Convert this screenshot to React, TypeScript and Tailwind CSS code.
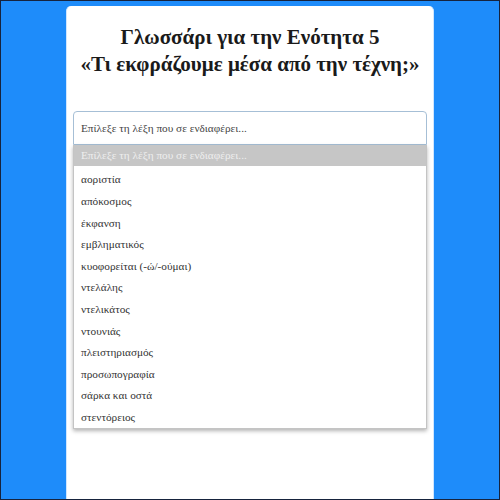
const words = [
  'αοριστία',
  'απόκοσμος',
  'έκφανση',
  'εμβληματικός',
  'κυοφορείται (-ώ/-ούμαι)',
  'ντελάλης',
  'ντελικάτος',
  'ντουνιάς',
  'πλειστηριασμός',
  'προσωπογραφία',
  'σάρκα και οστά',
  'στεντόρειος',
]

const placeholder = 'Επίλεξε τη λέξη που σε ενδιαφέρει...'

export default function App() {
  return (
    <div
      className="h-[500px] w-[500px] overflow-hidden border border-[#16233d] bg-[#1e8cfa] pt-[5px]"
      style={{ fontFamily: '"Liberation Serif", "DejaVu Serif", serif' }}
    >
      <div className="mx-auto h-full w-[368px] rounded-t-[5px] border-x border-[#cfe6ff] bg-white px-[6px]">
        <h1 className="-mx-[6px] whitespace-nowrap pt-[18px] text-center text-[21px] font-bold leading-[27px] text-[#1a1a1a]">
          Γλωσσάρι για την Ενότητα 5
          <br />
          «Τι εκφράζουμε μέσα από την τέχνη;»
        </h1>

        <div className="mt-[33px]">
          <div className="flex h-[34px] items-center rounded-t-[4px] border border-[#a6bfd6] px-[7px] text-[11.25px] text-[#444]">
            {placeholder}
          </div>
          <div className="border-x border-b border-[#c4c4c4] bg-white shadow-[0_2px_4px_rgba(0,0,0,0.3)]">
            <div className="flex h-[21px] items-center bg-[#c6c6c6] px-[7px] text-[11.25px] text-[#eeeeee]">
              {placeholder}
            </div>
            <div className="pt-[3px]">
              {words.map(w => (
                <div
                  key={w}
                  className="flex h-[21.6px] items-center px-[7px] text-[11.25px] text-[#333]"
                >
                  {w}
                </div>
              ))}
            </div>
          </div>
        </div>
      </div>
    </div>
  )
}
